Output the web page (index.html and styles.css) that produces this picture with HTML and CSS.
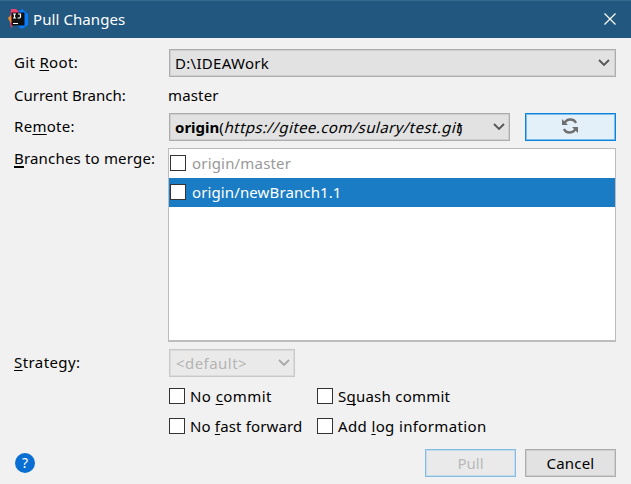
FILE: index.html
```html
<!DOCTYPE html>
<html lang="en">
<head>
<meta charset="utf-8">
<title>Pull Changes</title>
<link rel="stylesheet" href="styles.css">
</head>
<body>
<div class="dialog">
  <header class="titlebar">
    <svg class="logo" width="20" height="20" viewBox="0 0 20 20">
      <path d="M3 0h5l4 4-6 11-3 4-1-5z" fill="#f2416b"/>
      <path d="M0 9l3-3 3 9-4-2z" fill="#f58a2b"/>
      <path d="M11 2l3-2 6 5v11l-6 4-6-4z" fill="#087cfa"/>
      <path d="M3.500 3.500h13v13h-13z" fill="#111"/>
      <path d="M5 5h3M6.500 5v4M5 9h3M10 5h2.500v3l-.8 1H9.500M5 14.500h5" fill="none" stroke="#fff" stroke-width="1.2"/>
    </svg>
    <h1 class="title">Pull Changes</h1>
    <svg class="close" width="12" height="12" viewBox="0 0 12 12"><path d="M.5.5l11 11M11.500.5l-11 11"/></svg>
  </header>
  <main class="form">
    <div class="row row-root">
      <label class="label t-git">Git <u>R</u>oot:</label>
      <div class="combo"><span class="t-root">D:\IDEAWork</span><svg class="chevron" width="12" height="8" viewBox="0 0 12 8"><path d="M1 1l5 5 5-5"/></svg></div>
    </div>
    <div class="row row-current">
      <span class="label t-current">Current Branch:</span><span class="t-master">master</span>
    </div>
    <div class="row row-remote">
      <label class="label t-remote">Re<u>m</u>ote:</label>
      <div class="combo"><span><b class="t-origin">origin</b>(<i class="t-url">https://gitee.com/sulary/test.git</i>)</span><svg class="chevron" width="12" height="8" viewBox="0 0 12 8"><path d="M1 1l5 5 5-5"/></svg></div>
      <button class="button refresh" aria-label="Refresh">
        <svg width="18" height="16" viewBox="0 0 18 16"><path class="arc" d="M3 6.500C4 3 7 1.500 9.500 1.500c2.500 0 4.500 1.200 5.500 3.500M15 9.500c-1 3.500-4 5-6.500 5S4 13.300 3 11"/><path class="head" d="M1 1v6h6zM17 15V9h-6z"/></svg>
      </button>
    </div>
    <div class="row row-branches">
      <label class="label t-branches"><u class="thick">B</u>ranches to merge:</label>
      <ul class="list">
        <li class="item muted"><span class="box"></span><span class="t-bm">origin/master</span></li>
        <li class="item selected"><span class="box"></span><span class="t-bn">origin/newBranch1.1</span></li>
      </ul>
    </div>
    <div class="row row-strategy">
      <label class="label t-strategy"><u>S</u>trategy:</label>
      <div class="combo disabled"><span class="t-default">&lt;default&gt;</span><svg class="chevron" width="12" height="8" viewBox="0 0 12 8"><path d="M1 1l5 5 5-5"/></svg></div>
    </div>
    <div class="checks">
      <label class="check"><span class="box"></span><span class="t-nc">No <u>c</u>ommit</span></label>
      <label class="check"><span class="box"></span><span class="t-sq">S<u>q</u>uash commit</span></label>
      <label class="check"><span class="box"></span><span class="t-ff">No <u>f</u>ast forward</span></label>
      <label class="check"><span class="box"></span><span class="t-log">Add <u>l</u>og information</span></label>
    </div>
  </main>
  <footer class="footer">
    <span class="help">?</span>
    <button class="button pull" disabled>Pull</button>
    <button class="button cancel">Cancel</button>
  </footer>
</div>
</body>
</html>
```
FILE: styles.css
```css
* { box-sizing: border-box; }
body {
  margin: 0;
  font: 15px/20px "Noto Sans", "Open Sans", sans-serif;
  color: #000;
}
.dialog {
  width: 631px;
  height: 484px;
  display: flex;
  flex-direction: column;
  background: #f1f1f1;
  overflow: hidden;
}
.titlebar {
  height: 38px;
  display: flex;
  align-items: center;
  padding: 0 15px 1px 8px;
  background: #225880;
  border-top: 1px solid #37698d;
  color: #fff;
}
.title { margin: 0 auto 0 5px; font-size: 15px; font-weight: 400; line-height: 20px; letter-spacing: .08px; }
.close { fill: none; stroke: #fff; stroke-width: 1.2; }
.form { padding: 11px 15px 0 14px; }
.row { display: flex; align-items: center; }
.label { width: 155px; flex: none; white-space: nowrap; }
u { text-decoration: underline; text-decoration-thickness: 1px; text-underline-offset: 2px; text-decoration-skip-ink: none; }
.thick { text-decoration-thickness: 2px; }
.combo {
  flex: 1;
  height: 28px;
  display: flex;
  align-items: center;
  justify-content: space-between;
  padding: 0 5px 1px;
  border: 1px solid #adadad;
  box-shadow: inset 0 0 0 1px #cfcfcf;
  background: #e2e2e2;
  white-space: nowrap;
}
.chevron { fill: none; stroke: #555; stroke-width: 1.8; }
.row-current { height: 36px; }
.t-master { margin-left: -1px; letter-spacing: .15px; }
.t-git { letter-spacing: .33px; padding-bottom: 2px; }
.t-root { letter-spacing: .3px; }
.t-remote { letter-spacing: .3px; padding-bottom: 2px; }
.t-url { display: inline-block; font-style: normal; transform: skewX(-15deg); width: 233px; margin-left: 1px; letter-spacing: .4px; }
.t-branches { letter-spacing: .18px; }
.t-bm { letter-spacing: .18px; }
.t-bn { letter-spacing: .12px; }
.t-strategy { letter-spacing: .42px; padding-bottom: 2px; }
.t-default { letter-spacing: .45px; }
.t-nc { letter-spacing: .42px; }
.t-sq { letter-spacing: .24px; }
.t-ff { letter-spacing: .15px; }
.t-log { letter-spacing: .36px; }
.row-remote .combo { flex: none; width: 341px; padding-right: 4px; }
.button {
  width: 91px;
  height: 28px;
  padding: 0 0 1px;
  display: flex;
  align-items: center;
  justify-content: center;
  border: 1px solid #adadad;
  box-shadow: inset 0 0 0 1px #cfcfcf;
  background: #e2e2e2;
  font: inherit;
  color: #000;
}
.refresh { margin-left: 15px; padding: 0 2px 2px 0; border-color: #0d84dc; background: #e3f0f9; box-shadow: inset 0 0 0 1px #7abdec; }
.arc { fill: none; stroke: #6e6e6e; stroke-width: 2.4; }
.head { fill: #6e6e6e; }
.row-branches { align-items: flex-start; margin-top: 7px; }
.list {
  flex: 1;
  height: 194px;
  margin: 0 0 0 -1px;
  padding: 0;
  list-style: none;
  border: 1px solid #bcbcbc;
  border-bottom-width: 2px;
  background: #fff;
}
.item { height: 29px; display: flex; align-items: center; gap: 6px; padding: 0 0 1px 1px; }
.muted { color: #999; }
.selected { background: #1a7cc4; color: #fff; }
.box { width: 16px; height: 16px; flex: none; border: 1px solid #333; background: #fff; }
.row-strategy { margin-top: 7px; }
.disabled { flex: none; width: 126px; padding-left: 6px; padding-right: 4px; background: #eaeaea; border-color: #c9c9c9; box-shadow: inset 0 0 0 1px #dcdcdc; color: #b4b4b4; }
.disabled .chevron { stroke: #aaa; }
.checks { display: grid; grid-template-columns: 148px 200px; grid-auto-rows: 30px; margin: 4px 0 0 155px; }
.check { display: flex; align-items: center; gap: 5px; white-space: nowrap; }
.footer { display: flex; align-items: center; padding: 8px 15px 0 15px; }
.help { width: 20px; height: 20px; border-radius: 50%; background: #0a6fd2; color: #fff; text-align: center; margin-right: auto; font-size: 14px; }
.pull { border-color: #86bce2; background: #eaeaea; color: #b9b9b9; box-shadow: inset 0 0 0 1px #c2dded; }
.cancel { margin-left: 9px; letter-spacing: .2px; }
```
